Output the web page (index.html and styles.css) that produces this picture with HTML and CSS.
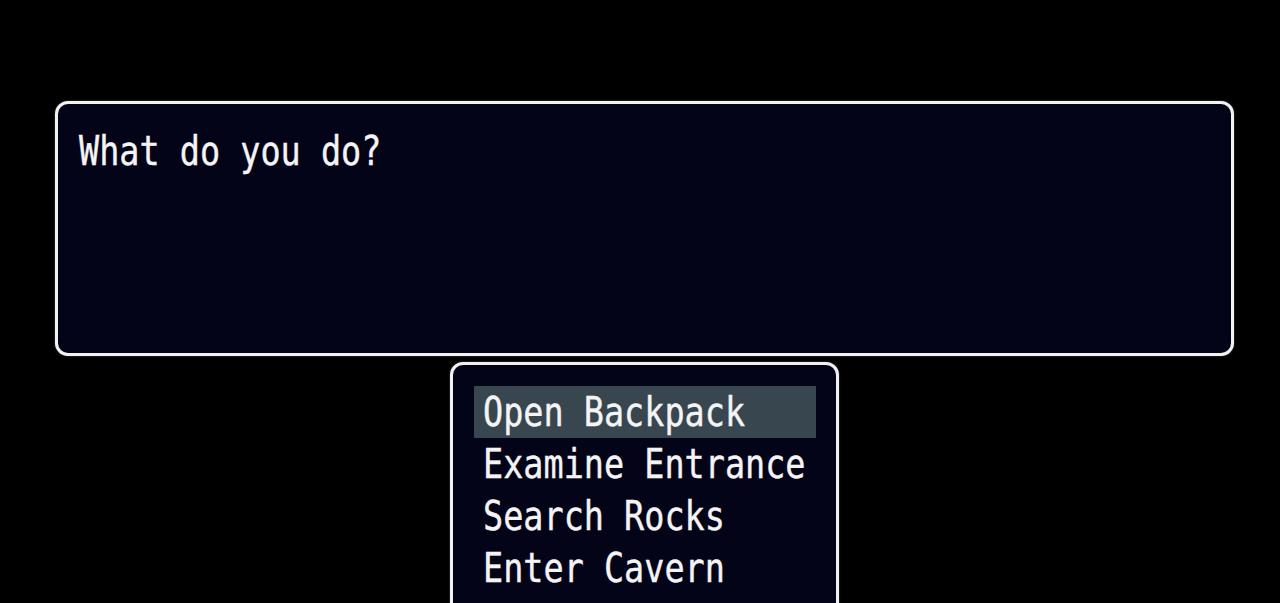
FILE: index.html
```html
<!DOCTYPE html>
<html>
<head>
<meta charset="utf-8">
<link rel="stylesheet" href="styles.css">
</head>
<body>
<div class="scene">
  <div class="window message">
    <div class="line"><span class="txt">What do you do?</span></div>
  </div>
  <div class="window menu">
    <div class="item selected"><span class="txt">Open Backpack</span></div>
    <div class="item"><span class="txt">Examine Entrance</span></div>
    <div class="item"><span class="txt">Search Rocks</span></div>
    <div class="item"><span class="txt">Enter Cavern</span></div>
  </div>
</div>
</body>
</html>
```
FILE: styles.css
```css
* { box-sizing: border-box; }
html, body {
  margin: 0;
  padding: 0;
  background: #000;
  width: 1280px;
  height: 603px;
  overflow: hidden;
}
.scene {
  display: flex;
  flex-direction: column;
  padding-top: 101px;
  font-family: "DejaVu Sans Mono", "Liberation Mono", monospace;
  font-size: 40px;
  line-height: 52px;
  color: #f4f4f4;
}
.window {
  background: #040419;
  border: 3px solid #f2f2f2;
  border-radius: 13px;
  box-shadow: 0 0 2px rgba(255,255,255,0.35);
}
.message {
  margin-left: 55px;
  width: 1179px;
  height: 255px;
  padding: 21px 0 0 21px;
}
.menu {
  margin-left: 450px;
  margin-top: 6px;
  width: 389px;
  height: 300px;
  padding: 21px 20px 0 21px;
}
.item {
  height: 52px;
  padding-left: 9px;
  white-space: nowrap;
}
.item.selected {
  background: #37464f;
}
.line { white-space: nowrap; height: 52px; }
.txt {
  display: inline-block;
  transform: scaleX(0.837);
  transform-origin: left center;
  -webkit-text-stroke: 0.4px #f4f4f4;
}
```
